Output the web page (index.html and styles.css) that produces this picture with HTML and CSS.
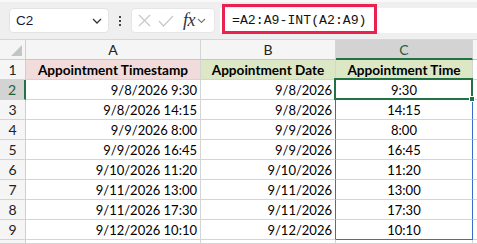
FILE: index.html
```html
<!DOCTYPE html>
<html>
<head>
<meta charset="utf-8">
<link rel="stylesheet" href="styles.css">
</head>
<body>
<div class="toolbar">
  <div class="namebox">
    <span class="nb-text">C2</span>
    <svg class="chev" width="10" height="6" viewBox="0 0 10 6"><path d="M1 1 L5 5 L9 1" fill="none" stroke="#333" stroke-width="1.3"/></svg>
  </div>
  <div class="dots"><i></i><i></i><i></i></div>
  <div class="fnbox">
    <svg width="13" height="13" viewBox="0 0 13 13"><path d="M1 1 L12 12 M12 1 L1 12" stroke="#c8c8c8" stroke-width="1.2" fill="none"/></svg>
    <svg width="16" height="12" viewBox="0 0 16 12"><path d="M1 6 L5.5 11 L15 1" stroke="#c8c8c8" stroke-width="1.2" fill="none"/></svg>
    <span class="fx">fx</span>
    <svg width="9" height="6" viewBox="0 0 9 6"><path d="M1 1 L4.5 4.5 L8 1" fill="none" stroke="#777" stroke-width="1.1"/></svg>
  </div>
  <div class="formula">
    <span class="ftext">=A2:A9-INT(A2:A9)</span>
    <div class="hl"></div>
  </div>
</div>
<div class="sheet">
  <div class="corner"><span class="tri"></span></div>
  <div class="ch">A</div>
  <div class="ch">B</div>
  <div class="ch sel">C</div>
  <div class="ch edge"></div>

  <div class="rh">1</div>
  <div class="c hd pink">Appointment Timestamp</div>
  <div class="c hd green">Appointment Date</div>
  <div class="c hd green">Appointment Time</div>
  <div class="c edge"></div>

  <div class="rh sel">2</div>
  <div class="c r">9/8/2026 9:30</div>
  <div class="c r sl">9/8/2026</div>
  <div class="c m sp act">9:30<span class="active"><span class="handle"></span></span></div>
  <div class="c edge"></div>

  <div class="rh">3</div>
  <div class="c r">9/8/2026 14:15</div>
  <div class="c r sl">9/8/2026</div>
  <div class="c m sp">14:15</div>
  <div class="c edge"></div>

  <div class="rh">4</div>
  <div class="c r">9/9/2026 8:00</div>
  <div class="c r sl">9/9/2026</div>
  <div class="c m sp">8:00</div>
  <div class="c edge"></div>

  <div class="rh">5</div>
  <div class="c r">9/9/2026 16:45</div>
  <div class="c r sl">9/9/2026</div>
  <div class="c m sp">16:45</div>
  <div class="c edge"></div>

  <div class="rh">6</div>
  <div class="c r">9/10/2026 11:20</div>
  <div class="c r sl">9/10/2026</div>
  <div class="c m sp">11:20</div>
  <div class="c edge"></div>

  <div class="rh">7</div>
  <div class="c r">9/11/2026 13:00</div>
  <div class="c r sl">9/11/2026</div>
  <div class="c m sp">13:00</div>
  <div class="c edge"></div>

  <div class="rh">8</div>
  <div class="c r">9/11/2026 17:30</div>
  <div class="c r sl">9/11/2026</div>
  <div class="c m sp">17:30</div>
  <div class="c edge"></div>

  <div class="rh">9</div>
  <div class="c r">9/12/2026 10:10</div>
  <div class="c r sl">9/12/2026</div>
  <div class="c m sp last">10:10</div>
  <div class="c edge"></div>

  <div class="rh"></div>
  <div class="c"></div>
  <div class="c"></div>
  <div class="c"></div>
  <div class="c edge"></div>
</div>
</body>
</html>
```

FILE: styles.css
```css
* { box-sizing: border-box; }
html, body { margin: 0; padding: 0; }
body {
  width: 477px;
  height: 244px;
  overflow: hidden;
  background: #ffffff;
  font-family: "Lato", "Liberation Sans", sans-serif;
}
.toolbar {
  height: 40px;
  background: #efefef;
  border-top: 2px solid #f9f9f9;
  border-bottom: 1px solid #d6d6d6;
  display: flex;
  align-items: flex-start;
  padding-top: 6px;
}
.namebox {
  margin-left: 9px;
  width: 100px;
  height: 25px;
  background: #fff;
  border: 1px solid #e3e3e3;
  border-radius: 4px;
  display: flex;
  align-items: center;
  justify-content: space-between;
  padding: 0 6px 0 6px;
}
.nb-text {
  font-family: "Liberation Sans", sans-serif;
  font-size: 13.5px;
  color: #1a1a3a;
}
.chev { margin-top: 1px; }
.dots {
  width: 22px;
  height: 25px;
  display: flex;
  flex-direction: column;
  align-items: center;
  justify-content: center;
  gap: 2px;
}
.dots i {
  display: block;
  width: 2px;
  height: 2px;
  background: #444;
}
.fnbox {
  width: 84px;
  height: 25px;
  background: #fff;
  border: 1px solid #e6e6e6;
  border-radius: 4px;
  display: flex;
  align-items: center;
  padding: 0 4px 0 6px;
}
.fnbox svg:nth-child(1) { margin-right: 7px; }
.fnbox svg:nth-child(2) { margin-right: 9px; }
.fx {
  font-family: "Liberation Serif", serif;
  font-style: italic;
  font-size: 18px;
  line-height: 1;
  color: #333;
  margin-right: 2px;
  margin-top: -2px;
  letter-spacing: -0.5px;
}
.formula {
  position: relative;
  margin-left: 5px;
  flex: 1;
  height: 25px;
  background: #fff;
  display: flex;
  align-items: center;
  padding-left: 12px;
}
.ftext {
  font-family: "Liberation Mono", monospace;
  font-size: 13.2px;
  color: #111;
}
.hl {
  position: absolute;
  left: 2px;
  top: -4px;
  width: 155px;
  height: 30px;
  border: 3px solid #e8234f;
}
.sheet {
  display: grid;
  grid-template-columns: 26px 175px 135px 137px 4px;
  grid-template-rows: repeat(10, 20px) 4px;
  font-size: 13px;
  color: #000;
}
.corner {
  background: #f5f5f5;
  border-right: 1px solid #cfcfcf;
  border-bottom: 1px solid #cfcfcf;
  position: relative;
}
.tri {
  position: absolute;
  right: 3px;
  bottom: 3px;
  width: 0;
  height: 0;
  border-left: 11px solid transparent;
  border-bottom: 11px solid #c4c4c4;
}
.ch {
  background: #f5f5f5;
  border-right: 1px solid #d4d4d4;
  border-bottom: 1px solid #c6c6c6;
  display: flex;
  align-items: center;
  justify-content: center;
  color: #222;
  font-size: 14px;
}
.ch.sel {
  background: #d3d3d3;
  border-bottom: 2px solid #217346;
  color: #1d5e3b;
}
.rh {
  background: #f5f5f5;
  border-right: 1px solid #cfcfcf;
  border-bottom: 1px solid #d4d4d4;
  display: flex;
  align-items: center;
  justify-content: center;
  color: #222;
  font-size: 14px;
}
.rh.sel {
  background: #d3d3d3;
  border-right: 2px solid #217346;
  color: #1d5e3b;
}
.c {
  border-right: 1px solid #d4d4d4;
  border-bottom: 1px solid #d4d4d4;
  display: flex;
  align-items: center;
  white-space: nowrap;
  background: #fff;
}
.c.r { justify-content: flex-end; padding-right: 3px; }
.c.m { justify-content: center; }
.c.hd { justify-content: center; font-weight: 700; font-size: 13.6px; }
.pink { background: #f2dcdb; }
.green { background: #dbe7c5; }
.edge { border-right: none; }
.c.sl { border-right-color: #3b6cc7; }
.c.sp { border-right-color: #3b6cc7; }
.c.sp.last { border-bottom-color: #3b6cc7; }
.c.act { position: relative; }
.active {
  position: absolute;
  left: -2px;
  top: -2px;
  right: -1px;
  bottom: -1px;
  border: 2px solid #217346;
}
.handle {
  position: absolute;
  right: -4px;
  bottom: -4px;
  width: 6px;
  height: 6px;
  background: #217346;
  border: 1px solid #fff;
}
```
